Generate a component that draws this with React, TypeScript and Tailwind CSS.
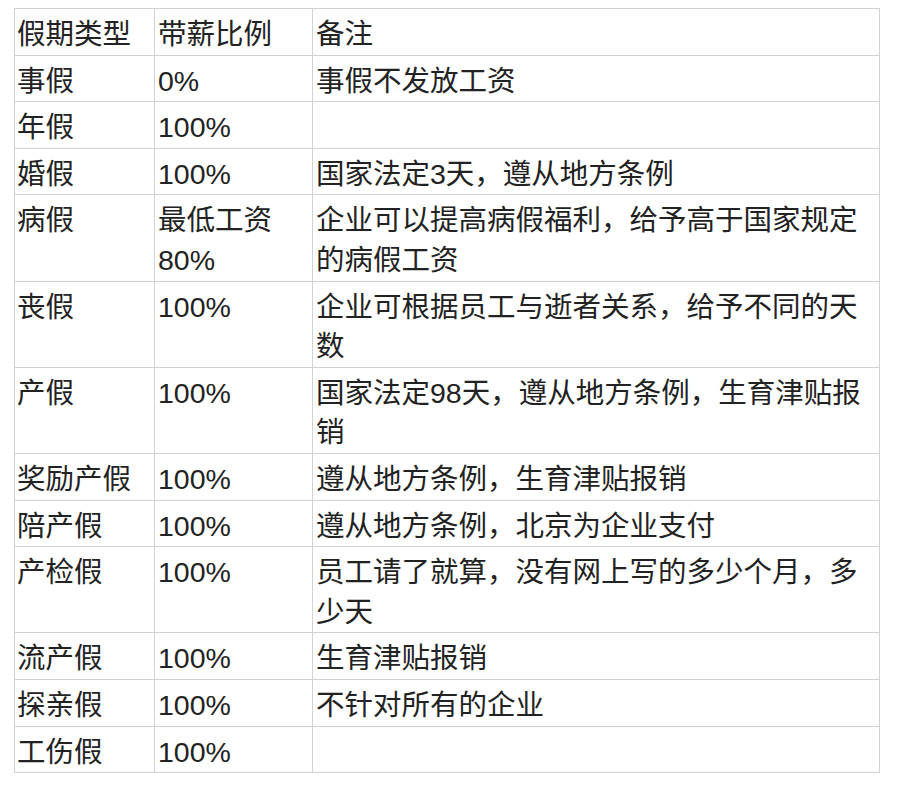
import React from "react";

type Row = { type: string; pay: string[]; note: string[] };

const rows: Row[] = [
  { type: "事假", pay: ["0%"], note: ["事假不发放工资"] },
  { type: "年假", pay: ["100%"], note: [] },
  { type: "婚假", pay: ["100%"], note: ["国家法定3天，遵从地方条例"] },
  { type: "病假", pay: ["最低工资", "80%"], note: ["企业可以提高病假福利，给予高于国家规定", "的病假工资"] },
  { type: "丧假", pay: ["100%"], note: ["企业可根据员工与逝者关系，给予不同的天", "数"] },
  { type: "产假", pay: ["100%"], note: ["国家法定98天，遵从地方条例，生育津贴报", "销"] },
  { type: "奖励产假", pay: ["100%"], note: ["遵从地方条例，生育津贴报销"] },
  { type: "陪产假", pay: ["100%"], note: ["遵从地方条例，北京为企业支付"] },
  { type: "产检假", pay: ["100%"], note: ["员工请了就算，没有网上写的多少个月，多", "少天"] },
  { type: "流产假", pay: ["100%"], note: ["生育津贴报销"] },
  { type: "探亲假", pay: ["100%"], note: ["不针对所有的企业"] },
  { type: "工伤假", pay: ["100%"], note: [] },
];

function Lines({ lines }: { lines: string[] }) {
  return (
    <>
      {lines.map((l, i) => (
        <div key={i} className="whitespace-nowrap">
          {l}
        </div>
      ))}
    </>
  );
}

const cell =
  "border border-[#d2d2d2] align-top pt-[6px] pb-0 leading-[39.6px]";

export default function App() {
  return (
    <div className="min-h-[792px] w-[900px] bg-white pl-[14px] pt-[8px] font-['Liberation_Sans','Noto_Sans_CJK_SC',sans-serif] text-[28.5px] text-[#222222]">
      <table className="w-[865px] table-fixed border-collapse bg-white">
        <colgroup>
          <col className="w-[140px]" />
          <col className="w-[158px]" />
          <col className="w-[567px]" />
        </colgroup>
        <tbody>
          <tr>
            <td className={`${cell} pl-[2px]`}>假期类型</td>
            <td className={`${cell} pl-[3px]`}>带薪比例</td>
            <td className={`${cell} pl-[3px]`}>备注</td>
          </tr>
          {rows.map((r) => (
            <tr key={r.type}>
              <td className={`${cell} pl-[2px]`}>{r.type}</td>
              <td className={`${cell} pl-[3px]`}>
                <Lines lines={r.pay} />
              </td>
              <td className={`${cell} pl-[3px]`}>
                {r.note.length ? <Lines lines={r.note} /> : <div>&nbsp;</div>}
              </td>
            </tr>
          ))}
        </tbody>
      </table>
    </div>
  );
}
